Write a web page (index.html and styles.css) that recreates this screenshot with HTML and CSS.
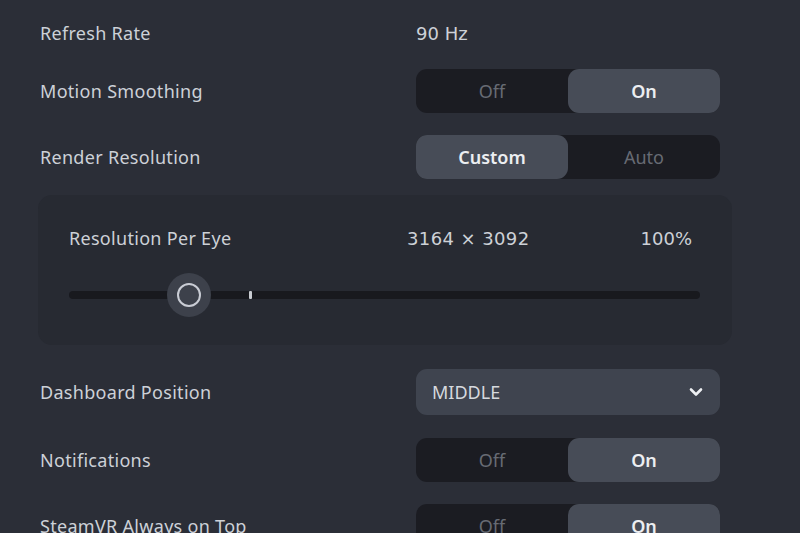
FILE: index.html
```html
<html>

<head>
    <link rel="stylesheet" href="styles.css">
</head>

<body>
    <div class="settings">
        <div class="row row-first">
            <div class="label">Refresh Rate</div>
            <div class="value num">90 Hz</div>
        </div>

        <div class="row">
            <div class="label">Motion Smoothing</div>
            <div class="toggle">
                <div class="seg">Off</div>
                <div class="seg active">On</div>
            </div>
        </div>

        <div class="row">
            <div class="label">Render Resolution</div>
            <div class="toggle">
                <div class="seg active">Custom</div>
                <div class="seg">Auto</div>
            </div>
        </div>

        <div class="panel">
            <div class="panel-head">
                <div class="panel-label">Resolution Per Eye</div>
                <div class="panel-res num">3164 × 3092</div>
                <div class="panel-pct num">100%</div>
            </div>
            <div class="slider">
                <div class="track"></div>
                <div class="tick"></div>
                <div class="thumb"><div class="thumb-ring"></div></div>
            </div>
        </div>

        <div class="row row-dash">
            <div class="label">Dashboard Position</div>
            <div class="dropdown">
                <span>MIDDLE</span>
                <svg width="16" height="12" viewBox="0 0 16 12">
                    <path d="M3 3.5 L8 8.5 L13 3.5" fill="none" stroke="#eef0f3" stroke-width="2.6" stroke-linecap="round" stroke-linejoin="round" />
                </svg>
            </div>
        </div>

        <div class="row">
            <div class="label">Notifications</div>
            <div class="toggle">
                <div class="seg">Off</div>
                <div class="seg active">On</div>
            </div>
        </div>

        <div class="row">
            <div class="label">SteamVR Always on Top</div>
            <div class="toggle">
                <div class="seg">Off</div>
                <div class="seg active">On</div>
            </div>
        </div>
    </div>
</body>

</html>
```

FILE: styles.css
```css
body {
    margin: 0;
    height: 533px;
    overflow: hidden;
    background-color: #2b2e37;
    font-family: "Noto Sans", "Open Sans", sans-serif;
    color: #cdd1d7;
}

.settings {
    display: flex;
    flex-direction: column;
    gap: 22px;
    padding: 11px 0 0 40px;
}

.row {
    display: flex;
    align-items: center;
    height: 44px;
}

.row-first {
    margin-bottom: -8px;
}

.row-dash {
    height: 46px;
    margin-top: 2px;
    margin-bottom: 1px;
}

.label {
    width: 376px;
    font-size: 18px;
    letter-spacing: 0.3px;
}

.value {
    font-size: 18px;
}

.num {
    font-family: "DejaVu Sans", "Noto Sans", sans-serif;
    font-size: 18px;
}

.toggle {
    display: flex;
    width: 304px;
    height: 44px;
    border-radius: 11px;
    background: #1b1c22;
}

.seg {
    flex: 1;
    display: flex;
    align-items: center;
    justify-content: center;
    border-radius: 11px;
    font-size: 18px;
    color: #676b74;
}

.seg.active {
    background: #474c57;
    color: #eceef1;
    font-weight: 600;
}

.panel {
    width: 694px;
    height: 150px;
    margin: -6px 0 0 -2px;
    padding: 0 32px 0 31px;
    box-sizing: border-box;
    border-radius: 14px;
    background: #272a32;
}

.panel-head {
    display: flex;
    align-items: center;
    height: 22px;
    margin-top: 32px;
    font-size: 18px;
    letter-spacing: 0.3px;
}

.panel-label {
    width: 338px;
}

.panel-res {
    flex: 1;
    letter-spacing: 0.4px;
}

.panel-pct {
    padding-right: 8px;
    letter-spacing: 0;
}

.slider {
    position: relative;
    height: 44px;
    margin-top: 24px;
}

.track {
    position: absolute;
    left: 0;
    right: 0;
    top: 18px;
    height: 8px;
    border-radius: 4px;
    background: #18191e;
}

.tick {
    position: absolute;
    left: 180px;
    top: 18px;
    width: 3px;
    height: 8px;
    border-radius: 1px;
    background: #c9ccd2;
}

.thumb {
    position: absolute;
    left: 98px;
    top: 0;
    width: 44px;
    height: 44px;
    border-radius: 50%;
    background: #3d414b;
    display: flex;
    align-items: center;
    justify-content: center;
}

.thumb-ring {
    width: 20px;
    height: 20px;
    border-radius: 50%;
    border: 2px solid #c9ccd4;
}

.dropdown {
    display: flex;
    align-items: center;
    justify-content: space-between;
    width: 304px;
    height: 46px;
    padding: 0 16px;
    box-sizing: border-box;
    border-radius: 11px;
    background: #3f444f;
    font-size: 18px;
    color: #d6d9de;
}
```
